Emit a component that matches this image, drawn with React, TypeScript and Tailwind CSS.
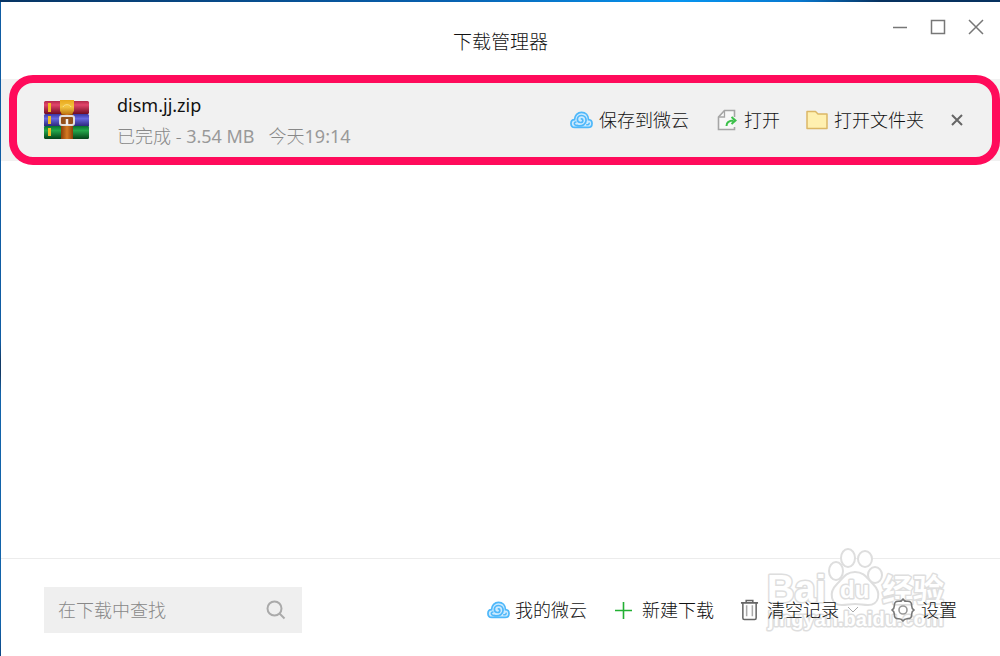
import type { ReactNode } from "react";

function WeiyunIcon() {
  return (
    <svg width="23" height="18" viewBox="0 0 24 18" fill="none" stroke="#4fb8fa" strokeLinecap="round" aria-hidden="true">
      <path
        d="M5 16.800C2.500 16.600 1 14.800 1 12.600c0-2.300 1.600-3.900 3.700-4C5 4.300 8 1 12 1c4.300 0 7.200 3.200 7.300 7.600 2.200.200 3.700 1.800 3.700 4 0 2.400-1.700 4.200-4.200 4.200z"
        fill="#cdeafe"
        strokeWidth="1.800"
      />
      <path
        d="M8 14.800c5 1 8.800-1.600 8.800-5.600 0-2.900-2-4.900-4.700-4.900-2.600 0-4.400 1.800-4.400 4 0 2 1.400 3.300 3.200 3.300 1.500 0 2.500-1 2.500-2.200 0-1-.7-1.600-1.500-1.600"
        strokeWidth="1.800"
      />
      <path d="M8 14.800c-1.500 0-3.500-.5-3.500-2.200 0-1 .8-1.600 1.700-1.500M17.500 14c1.300.200 2.300-.4 2.500-1.600" strokeWidth="1.600" />
    </svg>
  );
}

function ArchiveIcon() {
  return (
    <svg className="shrink-0" width="48" height="42" viewBox="0 0 48 42" aria-hidden="true">
      <defs>
        <linearGradient id="red" x2="0" y2="1">
          <stop offset="0" stopColor="#b32a4a" />
          <stop offset=".3" stopColor="#e2456b" />
          <stop offset="1" stopColor="#700c22" />
        </linearGradient>
        <linearGradient id="blue" x2="0" y2="1">
          <stop offset="0" stopColor="#3a35a0" />
          <stop offset=".35" stopColor="#6868e0" />
          <stop offset="1" stopColor="#25206f" />
        </linearGradient>
        <linearGradient id="green" x2="0" y2="1">
          <stop offset="0" stopColor="#08702c" />
          <stop offset=".35" stopColor="#25a84b" />
          <stop offset="1" stopColor="#044218" />
        </linearGradient>
        <linearGradient id="strap" x2="1" y2="0">
          <stop offset="0" stopColor="#8c3f09" />
          <stop offset=".5" stopColor="#d67a22" />
          <stop offset="1" stopColor="#8c3f09" />
        </linearGradient>
        <linearGradient id="flap" x2="0" y2="1">
          <stop offset="0" stopColor="#e9a81c" />
          <stop offset=".5" stopColor="#f3c440" />
          <stop offset="1" stopColor="#c07a12" />
        </linearGradient>
      </defs>
      <rect x="1" y="2" width="45" height="13" rx="1.500" fill="url(#red)" />
      <rect x="1" y="15" width="45" height="13" rx="1.500" fill="url(#blue)" />
      <rect x="1" y="27" width="45" height="13" rx="1.500" fill="url(#green)" />
      <path d="M5 4h3v9H5zM5 17h3v8H5zM5 29h3v8H5z" fill="#f3bd24" />
      <rect x="18" y="2" width="12" height="38" fill="url(#strap)" />
      <path d="M17 1h14v11l-2 3H19l-2-3z" fill="url(#flap)" />
      <path d="M20 8c1-3 7-3 8 0" fill="none" stroke="#fbe28a" />
      <rect x="17" y="17" width="14" height="9" rx="2" fill="#94501a" stroke="#e3dedb" strokeWidth="2" />
      <path d="M24 20v6" stroke="#f4f1ef" strokeWidth="2.500" />
    </svg>
  );
}

function OpenIcon() {
  return (
    <svg width="20" height="22" viewBox="0 0 20 22" fill="none" aria-hidden="true">
      <path d="M17.500 8V1.500H7.500L1.500 8v12.500h16V18" fill="#f8f8f8" stroke="#a5a5a5" strokeWidth="1.600" />
      <path d="M7.500 1.500V8h-6" stroke="#a5a5a5" strokeWidth="1.300" />
      <path d="M9.500 17c0-4 2-5.500 7-5.500M14.500 8l4 3.500-4 3.500" stroke="#3cc04a" strokeWidth="2" />
    </svg>
  );
}

function FolderIcon() {
  return (
    <svg width="22" height="20" viewBox="0 0 22 20" aria-hidden="true">
      <path d="M1 1.500h8.500L12 4h9v14.500H1z" fill="#fff0b0" stroke="#dcb766" strokeWidth="1.500" strokeLinejoin="round" />
    </svg>
  );
}

function TrashIcon() {
  return (
    <svg width="19" height="24" viewBox="0 0 20 24" fill="none" stroke="#666" strokeWidth="1.600" aria-hidden="true">
      <path d="M1 4.500h18M6.500 4V2h7v2M3 5v15.500c0 1 .6 1.500 1.500 1.500h11c1 0 1.500-.5 1.500-1.500V5" />
      <path d="M7 7v11.500M13 7v11.500" stroke="#aaa" />
    </svg>
  );
}

function GearIcon() {
  return (
    <svg width="24" height="24" viewBox="0 0 24 24" fill="none" stroke="#777" strokeWidth="1.600" strokeLinejoin="round" aria-hidden="true">
      <path d="M12 1c1 1.800 2.800 2.400 4 2.300 1.500-.1 3 .2 3.700 1 .8.800 1 2.200 1 3.700 0 1.200.5 3 2.300 4-1.800 1-2.300 2.800-2.300 4 0 1.500-.2 2.900-1 3.700-.7.800-2.200 1.100-3.700 1-1.200 0-3 .5-4 2.300-1-1.800-2.800-2.300-4-2.300-1.500.1-3-.2-3.700-1-.8-.8-1-2.200-1-3.700 0-1.200-.5-3-2.300-4 1.800-1 2.300-2.800 2.300-4 0-1.500.2-2.900 1-3.700.7-.8 2.200-1.100 3.700-1C9.200 3.400 11 2.800 12 1z" />
      <circle cx="12" cy="12" r="4" stroke="#999" />
    </svg>
  );
}

// Outlined paw logo with the site name around it
function Watermark() {
  return (
    <svg
      className="pointer-events-none absolute right-[50px] bottom-[16px]"
      width="186"
      height="96"
      viewBox="0 0 186 96"
      fill="#fff"
      stroke="#dedede"
      strokeWidth="2"
      strokeLinejoin="round"
      fontFamily='"Liberation Sans", "Noto Sans CJK SC", sans-serif'
      fontWeight="700"
      aria-hidden="true"
    >
      <g paintOrder="stroke" strokeWidth="3">
        <text x="3" y="58" fontSize="38">Bai</text>
        <text x="118" y="57" fontSize="31">经验</text>
        <text x="4" y="82" fontSize="20">jingyan.baidu.com</text>
      </g>
      <ellipse cx="84" cy="14" rx="7" ry="9" />
      <ellipse cx="101" cy="15" rx="7" ry="8" />
      <ellipse cx="72" cy="27" rx="7" ry="9" />
      <ellipse cx="111" cy="31" rx="7" ry="8" />
      <path d="M91 28c9 0 12 6 18 12 9 9 6 21-5 21-5 0-8-1-13-1s-8 1-13 1c-11 0-14-12-5-21 6-6 9-12 18-12z" />
      <text x="76" y="54" fontSize="24" strokeWidth="3" paintOrder="stroke">du</text>
    </svg>
  );
}

function Action({ icon, children, className = "" }: { icon: ReactNode; children: ReactNode; className?: string }) {
  return (
    <button type="button" className={`flex items-center whitespace-nowrap ${className}`}>
      {icon}
      {children}
    </button>
  );
}

export default function App() {
  return (
    <div className="flex min-h-screen flex-col bg-[linear-gradient(#0f5ca3_0,#0f5ca3_52%,#123a66_55%,#123a66_57%,#1263aa_60%,#1263aa_95%,#0c4584)] pl-px font-['Noto_Sans','Noto_Sans_CJK_SC',sans-serif] text-lg font-light text-[#111]">
      <div className="-ml-px h-0.5 bg-[linear-gradient(90deg,#073463,#0861b0_45%,#0795f0_68%,#0878cf_80%,#06315f_88%)]" />

      <header className="grid h-[77px] grid-cols-[1fr_auto_1fr] items-start bg-white">
        <h1 className="col-start-2 mt-[26px] text-[19px] leading-7">下载管理器</h1>
        <div className="mt-[17px] mr-4 flex justify-end gap-[22px]">
          <button type="button" aria-label="最小化">
            <svg width="16" height="16" viewBox="0 0 16 16" stroke="#777" strokeWidth="1.500">
              <path d="M1 8.500h14" />
            </svg>
          </button>
          <button type="button" aria-label="最大化">
            <svg width="16" height="16" viewBox="0 0 16 16" fill="none" stroke="#777" strokeWidth="1.500">
              <path d="M1.500 1.500h13v13h-13z" />
            </svg>
          </button>
          <button type="button" aria-label="关闭">
            <svg width="16" height="16" viewBox="0 0 16 16" stroke="#777" strokeWidth="1.500">
              <path d="M1 1l14 14M15 1L1 15" />
            </svg>
          </button>
        </div>
      </header>

      <main className="flex-1 bg-white">
        <ul>
          <li className="relative flex h-[82px] items-center bg-[#f1f1f1] pr-9 pl-[42px]">
            <ArchiveIcon />
            <div className="ml-[26px] whitespace-nowrap">
              <p className="leading-8 font-normal">dism.jj.zip</p>
              <p className="flex gap-3.5 leading-[30px] text-[#888]">
                <span>
                  已完成 - <span className="font-normal text-[#999]">3.54 MB</span>
                </span>
                <span>
                  今天<span className="font-normal text-[#999]">19:14</span>
                </span>
              </p>
            </div>
            <div className="ml-auto flex items-center">
              <Action icon={<WeiyunIcon />} className="mr-7 gap-1.5">保存到微云</Action>
              <Action icon={<OpenIcon />} className="mr-[26px] gap-[7px]">打开</Action>
              <Action icon={<FolderIcon />} className="mr-[26px] gap-1.5">打开文件夹</Action>
              <button type="button" aria-label="删除">
                <svg width="14" height="14" viewBox="0 0 14 14" stroke="#666" strokeWidth="2">
                  <path d="M2 2l10 10M12 2L2 12" />
                </svg>
              </button>
            </div>
            <div className="pointer-events-none absolute -top-1 right-0 -bottom-1 left-2 rounded-3xl border-8 border-[#ff0b5b]" />
          </li>
        </ul>
      </main>

      <footer className="relative flex items-center border-t border-[#ececec] bg-white pt-7 pr-[43px] pb-[23px] pl-[43px]">
        <Watermark />
        <label className="flex h-[46px] w-[258px] items-center bg-[#efefef] pr-4 pl-3.5">
          <input
            type="search"
            aria-label="在下载中查找"
            placeholder="在下载中查找"
            className="min-w-0 flex-1 bg-transparent outline-none placeholder:text-[#888]"
          />
          <svg width="20" height="20" viewBox="0 0 20 20" fill="none" stroke="#aaa" strokeWidth="2" aria-hidden="true">
            <circle cx="8.500" cy="8.500" r="7" />
            <path d="M13.500 13.500l5 5" />
          </svg>
        </label>
        <div className="relative ml-auto flex items-center">
          <Action icon={<WeiyunIcon />} className="mr-7 gap-[5px]">我的微云</Action>
          <Action
            icon={
              <svg width="17" height="17" viewBox="0 0 17 17" stroke="#22b033" strokeWidth="1.600" aria-hidden="true">
                <path d="M8.500 0v17M0 8.500h17" />
              </svg>
            }
            className="mr-[26px] gap-2.5"
          >
            新建下载
          </Action>
          <Action icon={<TrashIcon />} className="mr-8 gap-2">
            清空记录
            <svg width="12" height="8" viewBox="0 0 12 8" fill="none" stroke="#aaa" aria-hidden="true">
              <path d="M1 1l5 5 5-5" />
            </svg>
          </Action>
          <Action icon={<GearIcon />} className="gap-1.5">设置</Action>
        </div>
      </footer>
    </div>
  );
}
